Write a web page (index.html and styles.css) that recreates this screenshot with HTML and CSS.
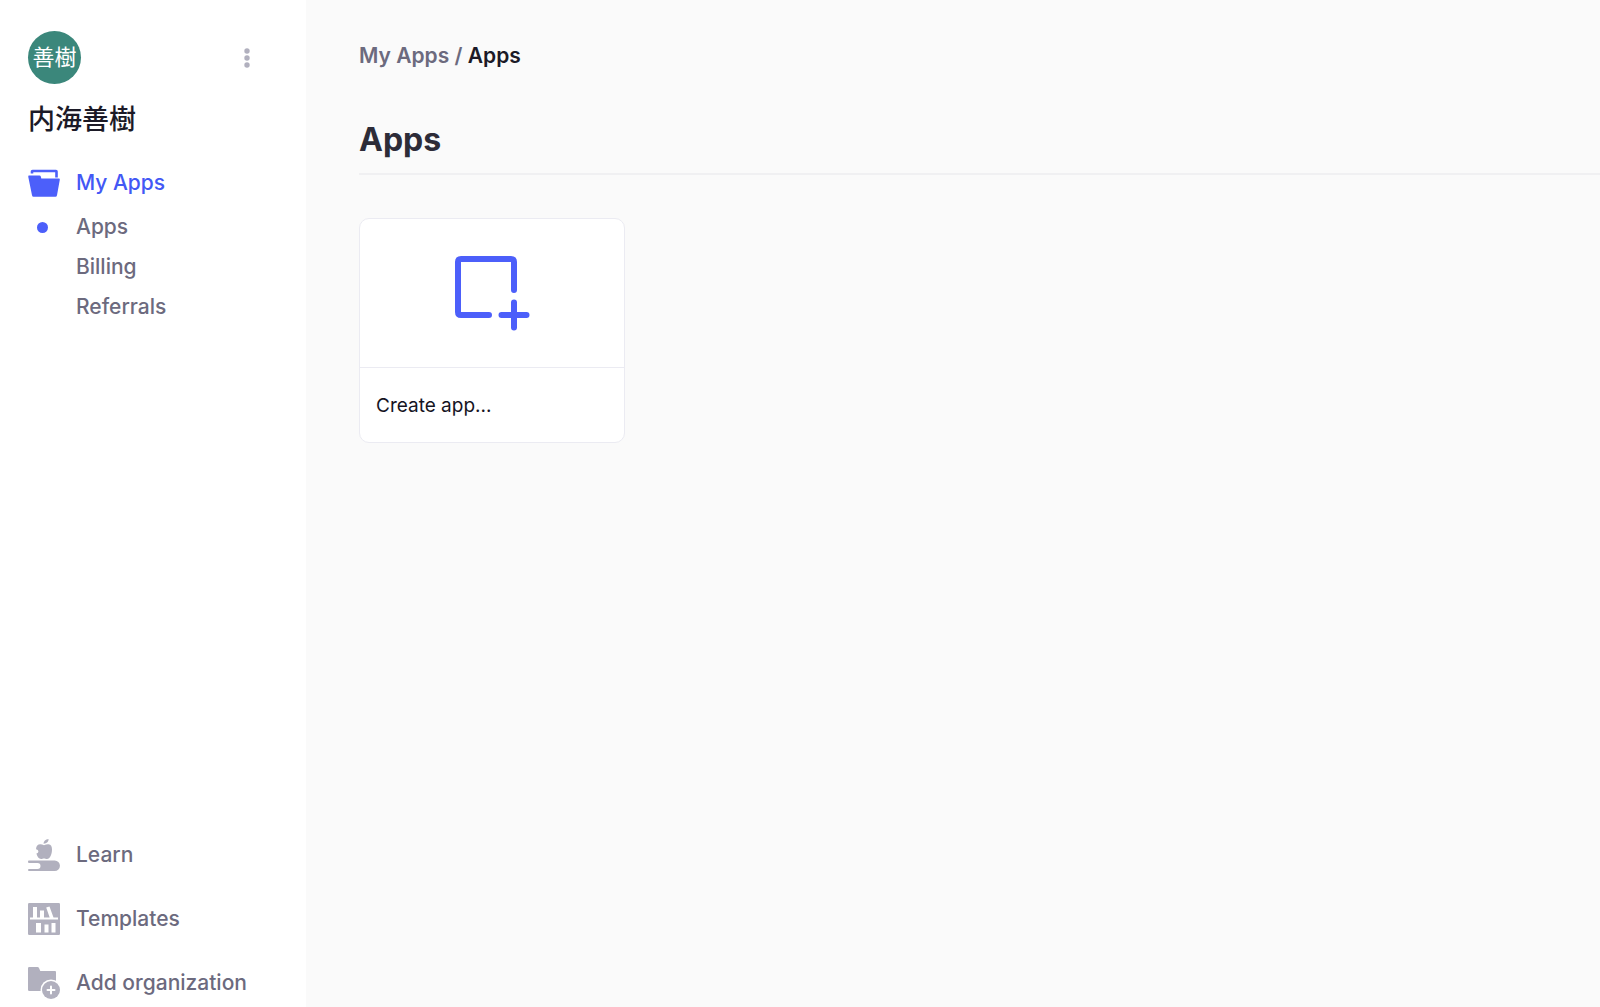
FILE: index.html
```html
<!DOCTYPE html>
<html lang="en">
<head>
  <meta charset="UTF-8">
  <meta name="viewport" content="width=device-width, initial-scale=1.0">
  <title>My Apps</title>
  <link rel="stylesheet" href="styles.css">
</head>
<body>
  <aside class="sidebar">
    <div class="account">
      <div class="avatar" lang="ja">善樹</div>
      <button class="more" type="button" aria-label="Account menu">
        <svg width="6" height="20" viewBox="0 0 6 20" fill="currentColor">
          <circle cx="3" cy="3" r="2.7"/>
          <circle cx="3" cy="10" r="2.7"/>
          <circle cx="3" cy="17" r="2.7"/>
        </svg>
      </button>
    </div>
    <div class="name" lang="ja">内海善樹</div>

    <nav class="nav">
      <a class="nav-link active" href="#">
        <svg class="icon" viewBox="0 0 32 32">
          <path d="M4 6.500V4.500Q4 4 4.500 4H28Q28.500 4 28.500 4.500V10.500" fill="none" stroke="currentColor" stroke-width="2.600"/>
          <path d="M1 8.500H11.500Q12.500 8.500 12.800 9.500L13.300 11.500H31Q32 11.500 31.800 12.700L29 28.200Q28.700 29.700 27.500 29.700H5.500Q4.300 29.700 4 28.200L.300 9.900Q0 8.500 1 8.500Z" fill="currentColor"/>
        </svg>
        My Apps
      </a>
      <ul class="subnav">
        <li><a class="current" href="#">Apps</a></li>
        <li><a href="#">Billing</a></li>
        <li><a href="#">Referrals</a></li>
      </ul>
    </nav>

    <nav class="bottom-nav">
      <a class="nav-link" href="#">
        <svg class="icon" viewBox="0 0 32 32" fill="currentColor">
          <path d="M15.500 4.700C15.500 2.200 17.500.500 20.500 0C20.800 2.500 18.800 4.500 15.500 4.700Z"/>
          <path d="M16 6.200C17.500 5.600 19 5.200 20.500 5.300C23 5.500 24 7.500 24 10.500C24 15 22 20 19 20C17.800 20 17 19.500 16 19.500C15 19.500 14.200 20 13 20C10.800 20 9.300 17.500 8.400 14.500C10.500 14 11 12 9.700 11C9.200 10.500 8.600 10.300 8 10.300C8.200 7 9.800 5.300 12.200 5.300C13.600 5.300 14.800 5.700 16 6.200Z"/>
          <path d="M1 21.500H26.700A5.250 5.250 0 0 1 26.700 32H1Q0 32 0 31T1 30H9.500A3 3 0 0 0 9.500 24H1Q0 24 0 22.700T1 21.500Z"/>
        </svg>
        Learn
      </a>
      <a class="nav-link" href="#">
        <svg class="icon" viewBox="0 0 32 32">
          <rect width="32" height="32" rx="1.200" fill="currentColor"/>
          <path d="M2 14.500H30V16.500H2ZM5 4H9V15H5ZM12 7.500H16V15H12ZM18.200 4.500L21.500 3.500L25.500 14.500L22 15.500ZM8 20H13V29.500H8ZM16.500 21.500H20.500V29.500H16.500ZM23.500 20H27.500V29.500H23.500Z" fill="#fff"/>
        </svg>
        Templates
      </a>
      <a class="nav-link" href="#">
        <svg class="icon" viewBox="0 0 32 32">
          <path d="M1.200 0H9.500Q10.500 0 11 1L12.300 4H27Q28 4 28 5V24H1.200Q0 24 0 22.800V1.200Q0 0 1.200 0Z" fill="currentColor"/>
          <circle cx="23" cy="23" r="10.500" fill="#fff"/>
          <circle cx="23" cy="23" r="9" fill="currentColor"/>
          <path d="M23 19.500V26.500M19.500 23H26.500" stroke="#fff" stroke-width="2" stroke-linecap="round"/>
        </svg>
        Add organization
      </a>
    </nav>
  </aside>

  <main class="content">
    <div class="breadcrumb"><a href="#">My Apps</a> / <span>Apps</span></div>
    <h1>Apps</h1>
    <div class="apps">
      <a class="card" href="#">
        <div class="card-image">
          <svg width="76" height="76" viewBox="0 0 76 76" fill="none" stroke="#4c5ffa" stroke-width="6" stroke-linecap="round" stroke-linejoin="round">
            <path d="M35 60H7Q4 60 4 57V7Q4 4 7 4H57Q60 4 60 7V35"/>
            <path d="M60 47.500V72.500M47.500 60H72.500"/>
          </svg>
        </div>
        <div class="card-title">Create app...</div>
      </a>
    </div>
  </main>
</body>
</html>
```

FILE: styles.css
```css
* {
  box-sizing: border-box;
}

body {
  display: flex;
  min-height: 100vh;
  margin: 0;
  font-family: Inter, "Noto Sans CJK JP", sans-serif;
  font-size: 21px;
  line-height: 32px;
  font-weight: 500;
  color: #6c6a7e;
  background-color: #fafafa;
}

a {
  color: inherit;
  text-decoration: none;
}

.sidebar {
  display: flex;
  flex-direction: column;
  flex: none;
  width: 306px;
  padding: 31px 28px 8px;
  background-color: #fff;
}

.account {
  display: flex;
  justify-content: space-between;
  align-items: center;
}

.avatar {
  width: 53px;
  height: 53px;
  border-radius: 50%;
  font-size: 22px;
  line-height: 53px;
  font-weight: 400;
  text-align: center;
  white-space: nowrap;
  color: #fff;
  background-color: #3b877b;
}

.more {
  display: flex;
  margin-right: 20px;
  padding: 8px;
  border: none;
  color: #b1b0be;
  background: none;
  cursor: pointer;
}

.name {
  margin-top: 16px;
  font-size: 27px;
  line-height: 40px;
  color: #1c1a27;
}

.nav {
  margin-top: 27px;
}

.nav-link {
  display: flex;
  align-items: center;
  gap: 16px;
}

.active {
  color: #4358f5;
}

.icon {
  width: 32px;
  height: 32px;
  color: #b1b0be;
}

.active .icon {
  color: #4c5ffa;
}

.subnav {
  margin: 8px 0 0;
  padding: 0;
  list-style: none;
}

.subnav a {
  display: block;
  padding-left: 48px;
  line-height: 40px;
}

.subnav .current {
  display: flex;
  align-items: center;
  gap: 28px;
  padding-left: 9px;
}

.current::before {
  content: "";
  width: 11px;
  height: 11px;
  border-radius: 50%;
  background-color: #4c5ffa;
}

.bottom-nav {
  display: flex;
  flex-direction: column;
  gap: 32px;
  margin-top: auto;
}

.content {
  flex: 1;
  padding: 40px 0 40px 53px;
}

.breadcrumb {
  font-weight: 600;
}

.breadcrumb span {
  color: #1c1a27;
}

h1 {
  margin: 48px 0 43px;
  padding-bottom: 13px;
  border-bottom: 2px solid #f0f0f2;
  font-size: 32px;
  line-height: 40px;
  font-weight: 700;
  color: #2d2c38;
}

.apps {
  display: grid;
  grid-template-columns: repeat(auto-fill, 266px);
  gap: 32px;
}

.card {
  border: 1px solid #ebebf2;
  border-radius: 10px;
  overflow: hidden;
  background-color: #fff;
}

.card-image {
  display: flex;
  justify-content: center;
  align-items: center;
  height: 149px;
  border-bottom: 1px solid #ebebf2;
}

.card-title {
  padding: 22px 16px 20px;
  font-size: 19px;
  font-weight: 400;
  color: #16141f;
}
```
